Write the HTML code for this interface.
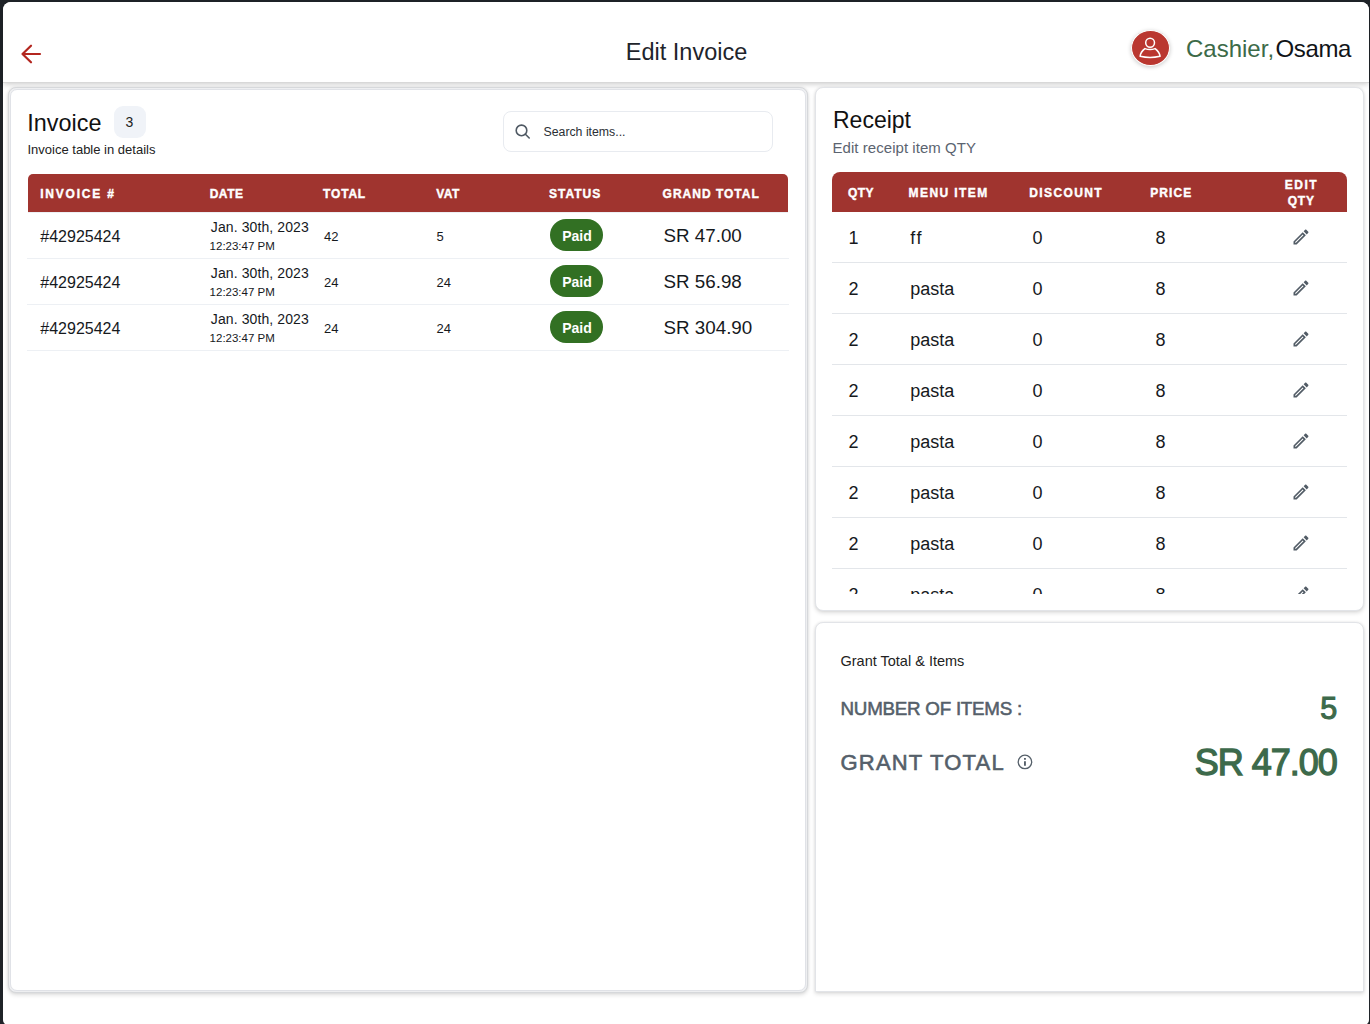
<!DOCTYPE html>
<html>
<head>
<meta charset="utf-8">
<style>
*{box-sizing:border-box;margin:0;padding:0}
html,body{width:1370px;height:1024px;overflow:hidden;background:#1f2328;font-family:"Liberation Sans",sans-serif;position:relative}
#screen{position:absolute;left:3px;top:2px;width:1366px;height:1023px;background:#fff;border-radius:8px 8px 5px 5px}
.abs{position:absolute}
#hdr{position:absolute;left:3px;top:2px;width:1366px;height:80px;background:#fff;border-radius:8px 8px 0 0;box-shadow:0 1px 0 #d8d8d8,0px 2px 4px -1px rgba(0,0,0,0.10),0px 4px 5px 0px rgba(0,0,0,0.07),0px 1px 10px 0px rgba(0,0,0,0.06)}
.t{position:absolute;white-space:nowrap;line-height:1;font-variant-ligatures:none}
.hd{-webkit-text-stroke:0.4px #fff}
.card{position:absolute;background:#fff;border-radius:8px}
#lc{left:8px;top:87px;width:800px;height:906px;border:1px solid #d6d8db;background:#eeeff1;box-shadow:0 2px 4px rgba(0,0,0,0.13),0 0 3px rgba(0,0,0,0.08)}
#lci{position:absolute;left:1px;top:1px;right:1px;bottom:1px;border:1px solid #e0e2e7;border-radius:7px;background:#fff}
#rc1{left:815px;top:87px;width:549px;height:524px;border:1px solid #e2e4e8;box-shadow:0 2px 4px rgba(0,0,0,0.13),0 0 3px rgba(0,0,0,0.08)}
#rc2{left:815px;top:622px;width:549px;height:370px;border-radius:8px 8px 0 0;border:1px solid #e2e4e8;box-shadow:0 2px 4px rgba(0,0,0,0.13),0 0 3px rgba(0,0,0,0.08)}
</style>
</head>
<body>
<div id="screen"></div>
<div id="hdr"></div>
<svg class="abs" style="left:19px;top:42px" width="24" height="24" viewBox="0 0 24 24" fill="none" stroke="#b3261f" stroke-width="2.2" stroke-linecap="round" stroke-linejoin="round"><path d="M21 12H3.5M12 3.7L3.5 12l8.5 8.3"/></svg>
<div class="t " style="left:625.80px;top:40.71px;font-size:23.5px;color:#1e242b;font-weight:400;">Edit Invoice</div>
<div class="abs" style="left:1130.5px;top:30px;width:39px;height:36px;border-radius:50%;background:#ba3730;border:1.7px solid #fff;box-shadow:0 1px 4px rgba(0,0,0,0.22)"></div>
<svg class="abs" style="left:1138px;top:36px" width="24" height="24" viewBox="0 0 24 24" fill="none" stroke="#fff" stroke-width="1.5" stroke-linejoin="round"><circle cx="12.1" cy="6.75" r="4.4"/><path d="M6.9 12.6 Q12 14.4 17.1 12.6 Q21.5 16 22.1 20.3 Q12 22.6 2.1 20.3 Q2.5 16 6.9 12.6Z"/></svg>
<div class="t " style="left:1186.00px;top:37.18px;font-size:24px;color:#3c6a48;font-weight:400;">Cashier,</div>
<div class="t " style="left:1275.50px;top:37.18px;font-size:24px;color:#111418;font-weight:400;letter-spacing:-0.35px">Osama</div>
<div id="lc" class="card"><div id="lci"></div></div>
<div class="t " style="left:27.30px;top:111.79px;font-size:23.4px;color:#111;font-weight:400;">Invoice</div>
<div class="abs" style="left:114px;top:106px;width:32px;height:32px;border-radius:9px;background:#f0f3f8"></div>
<div class="t " style="left:125.50px;top:114.95px;font-size:14px;color:#222;font-weight:400;">3</div>
<div class="t " style="left:27.50px;top:143.00px;font-size:13px;color:#222;font-weight:400;">Invoice table in details</div>
<div class="abs" style="left:503px;top:111px;width:270px;height:41px;border:1px solid #e8ebf0;border-radius:8px;background:#fff"></div>
<svg class="abs" style="left:511px;top:120px" width="22" height="22" viewBox="0 0 22 22" fill="none" stroke="#4f5963" stroke-width="1.6" stroke-linecap="round"><circle cx="10.5" cy="10.4" r="5.3"/><path d="M14.4 14.3L18.2 18"/></svg>
<div class="t " style="left:543.50px;top:125.79px;font-size:12.3px;color:#2a2f35;font-weight:400;">Search items...</div>
<div class="abs" style="left:28px;top:174px;width:760px;height:38px;background:#a0342f;border-radius:5px 5px 0 0"></div>
<div class="t hd" style="left:40.20px;top:187.74px;font-size:12px;color:#fff;font-weight:700;letter-spacing:1.8px">INVOICE #</div>
<div class="t hd" style="left:209.70px;top:187.74px;font-size:12px;color:#fff;font-weight:700;letter-spacing:0.5px">DATE</div>
<div class="t hd" style="left:323.10px;top:187.74px;font-size:12px;color:#fff;font-weight:700;letter-spacing:0.8px">TOTAL</div>
<div class="t hd" style="left:436.20px;top:187.74px;font-size:12px;color:#fff;font-weight:700;letter-spacing:0.5px">VAT</div>
<div class="t hd" style="left:549.00px;top:187.74px;font-size:12px;color:#fff;font-weight:700;letter-spacing:1px">STATUS</div>
<div class="t hd" style="left:662.60px;top:187.74px;font-size:12px;color:#fff;font-weight:700;letter-spacing:1px">GRAND TOTAL</div>
<div class="abs" style="left:27px;top:258px;width:762px;height:1px;background:#edf0f4"></div>
<div class="t " style="left:40.30px;top:228.86px;font-size:16px;color:#16191d;font-weight:400;">#42925424</div>
<div class="t " style="left:210.80px;top:219.65px;font-size:14px;color:#16191d;font-weight:400;letter-spacing:0.1px">Jan. 30th, 2023</div>
<div class="t " style="left:209.60px;top:241.47px;font-size:11.5px;color:#16191d;font-weight:400;">12:23:47 PM</div>
<div class="t " style="left:324.00px;top:229.80px;font-size:13px;color:#16191d;font-weight:400;">42</div>
<div class="t " style="left:436.50px;top:229.60px;font-size:13px;color:#16191d;font-weight:400;">5</div>
<div class="abs" style="left:550px;top:219px;width:53px;height:32px;border-radius:16px;background:#327023"></div>
<div class="t " style="left:562.20px;top:229.15px;font-size:14px;color:#fff;font-weight:700;">Paid</div>
<div class="t " style="left:663.50px;top:227.09px;font-size:18.8px;color:#16191d;font-weight:400;">SR 47.00</div>
<div class="abs" style="left:27px;top:304px;width:762px;height:1px;background:#edf0f4"></div>
<div class="t " style="left:40.30px;top:274.86px;font-size:16px;color:#16191d;font-weight:400;">#42925424</div>
<div class="t " style="left:210.80px;top:265.65px;font-size:14px;color:#16191d;font-weight:400;letter-spacing:0.1px">Jan. 30th, 2023</div>
<div class="t " style="left:209.60px;top:287.47px;font-size:11.5px;color:#16191d;font-weight:400;">12:23:47 PM</div>
<div class="t " style="left:324.00px;top:275.80px;font-size:13px;color:#16191d;font-weight:400;">24</div>
<div class="t " style="left:436.50px;top:275.60px;font-size:13px;color:#16191d;font-weight:400;">24</div>
<div class="abs" style="left:550px;top:265px;width:53px;height:32px;border-radius:16px;background:#327023"></div>
<div class="t " style="left:562.20px;top:275.15px;font-size:14px;color:#fff;font-weight:700;">Paid</div>
<div class="t " style="left:663.50px;top:273.09px;font-size:18.8px;color:#16191d;font-weight:400;">SR 56.98</div>
<div class="abs" style="left:27px;top:350px;width:762px;height:1px;background:#edf0f4"></div>
<div class="t " style="left:40.30px;top:320.86px;font-size:16px;color:#16191d;font-weight:400;">#42925424</div>
<div class="t " style="left:210.80px;top:311.65px;font-size:14px;color:#16191d;font-weight:400;letter-spacing:0.1px">Jan. 30th, 2023</div>
<div class="t " style="left:209.60px;top:333.47px;font-size:11.5px;color:#16191d;font-weight:400;">12:23:47 PM</div>
<div class="t " style="left:324.00px;top:321.80px;font-size:13px;color:#16191d;font-weight:400;">24</div>
<div class="t " style="left:436.50px;top:321.60px;font-size:13px;color:#16191d;font-weight:400;">24</div>
<div class="abs" style="left:550px;top:311px;width:53px;height:32px;border-radius:16px;background:#327023"></div>
<div class="t " style="left:562.20px;top:321.15px;font-size:14px;color:#fff;font-weight:700;">Paid</div>
<div class="t " style="left:663.50px;top:319.09px;font-size:18.8px;color:#16191d;font-weight:400;">SR 304.90</div>
<div class="abs" style="left:28px;top:212px;width:760px;height:1px;background:#edf0f4"></div>
<div id="rc1" class="card"></div>
<div class="t " style="left:833.00px;top:108.83px;font-size:23px;color:#111;font-weight:400;">Receipt</div>
<div class="t " style="left:832.50px;top:139.50px;font-size:15px;color:#5b6470;font-weight:400;letter-spacing:0.05px">Edit receipt item QTY</div>
<div class="abs" style="left:832px;top:172px;width:515px;height:40px;background:#a0342f;border-radius:8px 8px 0 0"></div>
<div class="t hd" style="left:847.90px;top:186.64px;font-size:12px;color:#fff;font-weight:700;letter-spacing:0.5px">QTY</div>
<div class="t hd" style="left:908.60px;top:186.64px;font-size:12px;color:#fff;font-weight:700;letter-spacing:1.4px">MENU ITEM</div>
<div class="t hd" style="left:1029.20px;top:186.64px;font-size:12px;color:#fff;font-weight:700;letter-spacing:1.4px">DISCOUNT</div>
<div class="t hd" style="left:1150.20px;top:186.64px;font-size:12px;color:#fff;font-weight:700;letter-spacing:1.1px">PRICE</div>
<div class="t hd" style="left:1301.50px;top:178.74px;font-size:12px;color:#fff;font-weight:700;letter-spacing:1.5px;transform:translateX(-50%)">EDIT</div>
<div class="t hd" style="left:1301.20px;top:194.64px;font-size:12px;color:#fff;font-weight:700;letter-spacing:0.8px;transform:translateX(-50%)">QTY</div>
<div class="abs" style="left:832px;top:212px;width:515px;height:382px;overflow:hidden">
<div class="t" style="left:16.50px;top:16.76px;font-size:18px;color:#16191d;font-weight:400;">1</div>
<div class="t" style="left:78.30px;top:16.76px;font-size:18px;color:#16191d;font-weight:400;letter-spacing:1.6px">ff</div>
<div class="t" style="left:200.50px;top:16.76px;font-size:18px;color:#16191d;font-weight:400;">0</div>
<div class="t" style="left:323.50px;top:16.76px;font-size:18px;color:#16191d;font-weight:400;">8</div>
<svg class="abs" style="left:459px;top:15px" width="20" height="20" viewBox="0 0 24 24" fill="#525c66"><path d="M3 17.25V21h3.75L17.81 9.94l-3.75-3.75L3 17.25zM5.92 19H5v-.92l9.06-9.06.92.92L5.92 19zM20.71 5.63l-2.34-2.34c-.2-.2-.45-.29-.71-.29s-.51.1-.7.29l-1.83 1.83 3.75 3.75 1.83-1.83c.39-.39.39-1.02 0-1.41z"/></svg>
<div class="abs" style="left:0;top:50px;width:515px;height:1px;background:#e3e6ea"></div>
<div class="t" style="left:16.50px;top:67.76px;font-size:18px;color:#16191d;font-weight:400;">2</div>
<div class="t" style="left:78.30px;top:67.76px;font-size:18px;color:#16191d;font-weight:400;">pasta</div>
<div class="t" style="left:200.50px;top:67.76px;font-size:18px;color:#16191d;font-weight:400;">0</div>
<div class="t" style="left:323.50px;top:67.76px;font-size:18px;color:#16191d;font-weight:400;">8</div>
<svg class="abs" style="left:459px;top:66px" width="20" height="20" viewBox="0 0 24 24" fill="#525c66"><path d="M3 17.25V21h3.75L17.81 9.94l-3.75-3.75L3 17.25zM5.92 19H5v-.92l9.06-9.06.92.92L5.92 19zM20.71 5.63l-2.34-2.34c-.2-.2-.45-.29-.71-.29s-.51.1-.7.29l-1.83 1.83 3.75 3.75 1.83-1.83c.39-.39.39-1.02 0-1.41z"/></svg>
<div class="abs" style="left:0;top:101px;width:515px;height:1px;background:#e3e6ea"></div>
<div class="t" style="left:16.50px;top:118.76px;font-size:18px;color:#16191d;font-weight:400;">2</div>
<div class="t" style="left:78.30px;top:118.76px;font-size:18px;color:#16191d;font-weight:400;">pasta</div>
<div class="t" style="left:200.50px;top:118.76px;font-size:18px;color:#16191d;font-weight:400;">0</div>
<div class="t" style="left:323.50px;top:118.76px;font-size:18px;color:#16191d;font-weight:400;">8</div>
<svg class="abs" style="left:459px;top:117px" width="20" height="20" viewBox="0 0 24 24" fill="#525c66"><path d="M3 17.25V21h3.75L17.81 9.94l-3.75-3.75L3 17.25zM5.92 19H5v-.92l9.06-9.06.92.92L5.92 19zM20.71 5.63l-2.34-2.34c-.2-.2-.45-.29-.71-.29s-.51.1-.7.29l-1.83 1.83 3.75 3.75 1.83-1.83c.39-.39.39-1.02 0-1.41z"/></svg>
<div class="abs" style="left:0;top:152px;width:515px;height:1px;background:#e3e6ea"></div>
<div class="t" style="left:16.50px;top:169.76px;font-size:18px;color:#16191d;font-weight:400;">2</div>
<div class="t" style="left:78.30px;top:169.76px;font-size:18px;color:#16191d;font-weight:400;">pasta</div>
<div class="t" style="left:200.50px;top:169.76px;font-size:18px;color:#16191d;font-weight:400;">0</div>
<div class="t" style="left:323.50px;top:169.76px;font-size:18px;color:#16191d;font-weight:400;">8</div>
<svg class="abs" style="left:459px;top:168px" width="20" height="20" viewBox="0 0 24 24" fill="#525c66"><path d="M3 17.25V21h3.75L17.81 9.94l-3.75-3.75L3 17.25zM5.92 19H5v-.92l9.06-9.06.92.92L5.92 19zM20.71 5.63l-2.34-2.34c-.2-.2-.45-.29-.71-.29s-.51.1-.7.29l-1.83 1.83 3.75 3.75 1.83-1.83c.39-.39.39-1.02 0-1.41z"/></svg>
<div class="abs" style="left:0;top:203px;width:515px;height:1px;background:#e3e6ea"></div>
<div class="t" style="left:16.50px;top:220.76px;font-size:18px;color:#16191d;font-weight:400;">2</div>
<div class="t" style="left:78.30px;top:220.76px;font-size:18px;color:#16191d;font-weight:400;">pasta</div>
<div class="t" style="left:200.50px;top:220.76px;font-size:18px;color:#16191d;font-weight:400;">0</div>
<div class="t" style="left:323.50px;top:220.76px;font-size:18px;color:#16191d;font-weight:400;">8</div>
<svg class="abs" style="left:459px;top:219px" width="20" height="20" viewBox="0 0 24 24" fill="#525c66"><path d="M3 17.25V21h3.75L17.81 9.94l-3.75-3.75L3 17.25zM5.92 19H5v-.92l9.06-9.06.92.92L5.92 19zM20.71 5.63l-2.34-2.34c-.2-.2-.45-.29-.71-.29s-.51.1-.7.29l-1.83 1.83 3.75 3.75 1.83-1.83c.39-.39.39-1.02 0-1.41z"/></svg>
<div class="abs" style="left:0;top:254px;width:515px;height:1px;background:#e3e6ea"></div>
<div class="t" style="left:16.50px;top:271.76px;font-size:18px;color:#16191d;font-weight:400;">2</div>
<div class="t" style="left:78.30px;top:271.76px;font-size:18px;color:#16191d;font-weight:400;">pasta</div>
<div class="t" style="left:200.50px;top:271.76px;font-size:18px;color:#16191d;font-weight:400;">0</div>
<div class="t" style="left:323.50px;top:271.76px;font-size:18px;color:#16191d;font-weight:400;">8</div>
<svg class="abs" style="left:459px;top:270px" width="20" height="20" viewBox="0 0 24 24" fill="#525c66"><path d="M3 17.25V21h3.75L17.81 9.94l-3.75-3.75L3 17.25zM5.92 19H5v-.92l9.06-9.06.92.92L5.92 19zM20.71 5.63l-2.34-2.34c-.2-.2-.45-.29-.71-.29s-.51.1-.7.29l-1.83 1.83 3.75 3.75 1.83-1.83c.39-.39.39-1.02 0-1.41z"/></svg>
<div class="abs" style="left:0;top:305px;width:515px;height:1px;background:#e3e6ea"></div>
<div class="t" style="left:16.50px;top:322.76px;font-size:18px;color:#16191d;font-weight:400;">2</div>
<div class="t" style="left:78.30px;top:322.76px;font-size:18px;color:#16191d;font-weight:400;">pasta</div>
<div class="t" style="left:200.50px;top:322.76px;font-size:18px;color:#16191d;font-weight:400;">0</div>
<div class="t" style="left:323.50px;top:322.76px;font-size:18px;color:#16191d;font-weight:400;">8</div>
<svg class="abs" style="left:459px;top:321px" width="20" height="20" viewBox="0 0 24 24" fill="#525c66"><path d="M3 17.25V21h3.75L17.81 9.94l-3.75-3.75L3 17.25zM5.92 19H5v-.92l9.06-9.06.92.92L5.92 19zM20.71 5.63l-2.34-2.34c-.2-.2-.45-.29-.71-.29s-.51.1-.7.29l-1.83 1.83 3.75 3.75 1.83-1.83c.39-.39.39-1.02 0-1.41z"/></svg>
<div class="abs" style="left:0;top:356px;width:515px;height:1px;background:#e3e6ea"></div>
<div class="t" style="left:16.50px;top:373.76px;font-size:18px;color:#16191d;font-weight:400;">2</div>
<div class="t" style="left:78.30px;top:373.76px;font-size:18px;color:#16191d;font-weight:400;">pasta</div>
<div class="t" style="left:200.50px;top:373.76px;font-size:18px;color:#16191d;font-weight:400;">0</div>
<div class="t" style="left:323.50px;top:373.76px;font-size:18px;color:#16191d;font-weight:400;">8</div>
<svg class="abs" style="left:459px;top:372px" width="20" height="20" viewBox="0 0 24 24" fill="#525c66"><path d="M3 17.25V21h3.75L17.81 9.94l-3.75-3.75L3 17.25zM5.92 19H5v-.92l9.06-9.06.92.92L5.92 19zM20.71 5.63l-2.34-2.34c-.2-.2-.45-.29-.71-.29s-.51.1-.7.29l-1.83 1.83 3.75 3.75 1.83-1.83c.39-.39.39-1.02 0-1.41z"/></svg>
<div class="abs" style="left:0;top:407px;width:515px;height:1px;background:#e3e6ea"></div>
</div>
<div id="rc2" class="card"></div>
<div class="t " style="left:840.50px;top:653.73px;font-size:14.5px;color:#222;font-weight:400;">Grant Total &amp; Items</div>
<div class="t " style="left:840.50px;top:700.09px;font-size:18.8px;color:#555f6a;font-weight:400;letter-spacing:-0.25px;-webkit-text-stroke:0.55px #555f6a">NUMBER OF ITEMS :</div>
<div class="t " style="left:1337.10px;top:692.98px;font-size:30.5px;color:#3d6a4b;font-weight:400;-webkit-text-stroke:1.1px #3d6a4b;transform:translateX(-100%)">5</div>
<div class="t " style="left:840.50px;top:751.98px;font-size:22px;color:#555f6a;font-weight:400;letter-spacing:1.2px;-webkit-text-stroke:0.6px #555f6a">GRANT TOTAL</div>
<svg class="abs" style="left:1015px;top:752px" width="20" height="20" viewBox="0 0 20 20" fill="none" stroke="#56606a" stroke-width="1.3"><circle cx="9.95" cy="9.95" r="6.75"/><path d="M9.95 9.2V13.8" stroke-width="1.9"/><path d="M9.95 6V7.7" stroke-width="1.9"/></svg>
<div class="t " style="left:1336.80px;top:744.53px;font-size:36px;color:#3d6a4b;font-weight:400;letter-spacing:-1px;-webkit-text-stroke:1.3px #3d6a4b;transform:translateX(-100%)">SR 47.00</div>
</body>
</html>
